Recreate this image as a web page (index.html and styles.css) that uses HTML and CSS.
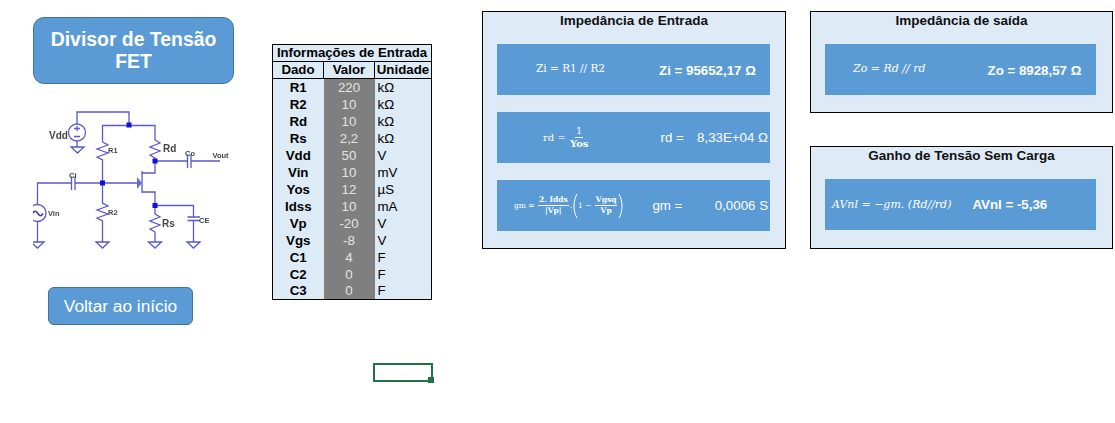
FILE: index.html
```html
<!DOCTYPE html>
<html lang="pt">
<head>
<meta charset="utf-8">
<title>Divisor de Tensão FET</title>
<link rel="stylesheet" href="styles.css">
</head>
<body>
<main class="sheet">
  <section class="left">
    <div class="title-shape">Divisor de Tensão<br>FET</div>
    <svg class="circuit" viewBox="33 108 201 142" width="201" height="142" xmlns="http://www.w3.org/2000/svg">
      <g class="wire">
        <path d="M77 124V112H129V125"/>
        <circle cx="77" cy="132.500" r="8.500"/>
        <path d="M74 128.500h6M77 126v5M74 136.500h6"/>
        <path d="M77 141V147M71 147H84L77.500 153Z"/>
        <path d="M102.500 142V125.500H155V140L160 143L150 147L160 151L150 155L155 158V173H142M142 171V193M142 192H155V214"/>
        <path d="M102.500 142L108 145L97 149L108 153L97 157L102.500 160V203L108 206L97 210L108 214L97 218L102.500 221V242M96 242H109L102.500 248Z"/>
        <path d="M37.500 204V183H71M75 183H137"/>
        <path d="M71.500 176.500V190M75 176.500V190"/>
        <circle cx="37.500" cy="213" r="8.500"/>
        <path class="sine" d="M32.500 213.500C34.500 210.500 36 210.500 38 213.500S41 216.500 43 213.500"/>
        <path d="M37.500 222V242M31 242H44L37.500 248Z"/>
        <path d="M155 214L160 217L150 221L160 225L150 229L155 232V242M148.500 242H161.500L155 248Z"/>
        <path d="M155 161H187.500M191 161H220M187.500 154.500V168M191 154.500V168"/>
        <path d="M155 205.500H193.500V217M187.500 217H200M187.500 220.500H200M193.500 220.500V242M187 242H200L193.500 248Z"/>
      </g>
      <path class="arrow" d="M137 177V189L142 183Z"/>
      <g class="node">
        <rect x="126.500" y="122.500" width="5" height="5"/>
        <rect x="100" y="180.500" width="5" height="5"/>
        <rect x="152.500" y="158.500" width="5" height="5"/>
        <rect x="152.500" y="203" width="5" height="5"/>
      </g>
      <g class="lbl-big">
        <text x="49" y="139">Vdd</text>
        <text x="163" y="151.500">Rd</text>
        <text x="162" y="227">Rs</text>
      </g>
      <g class="lbl-small">
        <text x="108" y="152.500">R1</text>
        <text x="108" y="215">R2</text>
        <text x="69" y="178">Ci</text>
        <text x="48" y="215.500">Vin</text>
        <text x="185" y="156">Co</text>
        <text x="212.500" y="158">Vout</text>
        <text x="199" y="223">CE</text>
      </g>
    </svg>
    <button class="back" type="button">Voltar ao início</button>
  </section>

  <section class="inputs">
    <table class="data">
      <colgroup><col class="c1"><col class="c2"><col class="c3"></colgroup>
      <thead>
        <tr class="caption-row"><th colspan="3">Informações de Entrada</th></tr>
        <tr class="head-row"><th>Dado</th><th>Valor</th><th>Unidade</th></tr>
      </thead>
      <tbody>
        <tr><th>R1</th><td class="val">220</td><td class="unit">kΩ</td></tr>
        <tr><th>R2</th><td class="val">10</td><td class="unit">kΩ</td></tr>
        <tr><th>Rd</th><td class="val">10</td><td class="unit">kΩ</td></tr>
        <tr><th>Rs</th><td class="val">2,2</td><td class="unit">kΩ</td></tr>
        <tr><th>Vdd</th><td class="val">50</td><td class="unit">V</td></tr>
        <tr><th>Vin</th><td class="val">10</td><td class="unit">mV</td></tr>
        <tr><th>Yos</th><td class="val">12</td><td class="unit">µS</td></tr>
        <tr><th>Idss</th><td class="val">10</td><td class="unit">mA</td></tr>
        <tr><th>Vp</th><td class="val">-20</td><td class="unit">V</td></tr>
        <tr><th>Vgs</th><td class="val">-8</td><td class="unit">V</td></tr>
        <tr><th>C1</th><td class="val">4</td><td class="unit">F</td></tr>
        <tr><th>C2</th><td class="val">0</td><td class="unit">F</td></tr>
        <tr><th>C3</th><td class="val">0</td><td class="unit">F</td></tr>
      </tbody>
    </table>
    <div class="selected-cell"><span class="handle"></span></div>
  </section>

  <section class="panel panel-in">
    <h2>Impedância de Entrada</h2>
    <div class="strips">
      <div class="strip zi">
        <span class="formula">Zi = R1 // R2</span>
        <span class="value bold">Zi = 95652,17 Ω</span>
      </div>
      <div class="strip rd">
        <span class="formula f-lg">rd = <span class="frac"><span class="num">1</span><span class="den">Yos</span></span></span>
        <span class="value lab">rd =</span>
        <span class="value res">8,33E+04 Ω</span>
      </div>
      <div class="strip gm">
        <span class="formula f-sm">gm = <span class="frac"><span class="num">2. Idds</span><span class="den">|Vp|</span></span>.<svg class="paren" viewBox="0 0 6 26" width="6" height="26"><path d="M5 1C1 8 1 18 5 25"/></svg>1 − <span class="frac"><span class="num">Vgsq</span><span class="den">Vp</span></span><svg class="paren" viewBox="0 0 6 26" width="6" height="26"><path d="M1 1C5 8 5 18 1 25"/></svg></span>
        <span class="value lab">gm =</span>
        <span class="value res">0,0006 S</span>
      </div>
    </div>
  </section>

  <div class="right">
    <section class="panel panel-out">
      <h2>Impedância de saída</h2>
      <div class="strips">
        <div class="strip zo">
          <span class="formula it">Zo = Rd // rd</span>
          <span class="value bold">Zo = 8928,57 Ω</span>
        </div>
      </div>
    </section>
    <section class="panel panel-gain">
      <h2>Ganho de Tensão Sem Carga</h2>
      <div class="strips">
        <div class="strip av">
          <span class="formula it">AVnl = −gm. (Rd//rd)</span>
          <span class="value av-val">AVnl =&nbsp;-5,36</span>
        </div>
      </div>
    </section>
  </div>
</main>
</body>
</html>
```
FILE: styles.css
```css
* { box-sizing: border-box; }
html, body { margin: 0; padding: 0; background: #fff; }
body { font-family: "Liberation Sans", Arial, sans-serif; color: #000; height: 423px; overflow: hidden; }
.sheet { display: flex; align-items: flex-start; padding-top: 11px; position: relative; }

/* left column */
.left { width: 239px; margin-left: 33px; padding-top: 6px; display: flex; flex-direction: column; align-items: flex-start; flex: none; }
.title-shape {
  width: 201px; height: 67px; background: #5b9bd5; border: 1px solid #41719c; border-radius: 11px;
  color: #fff; font-weight: bold; font-size: 19.400px; line-height: 22px; text-align: center; padding-top: 10px;
}
.circuit { display: block; margin-top: 24px; filter: blur(0.35px); }
.wire { fill: none; stroke: #5a5ac8; stroke-width: 1.300; }
.sine { stroke: #3c3c9c; stroke-width: 1.600; }
.arrow { fill: #6a6ae0; }
.node { fill: #1010d8; }
.lbl-big { font-size: 10px; font-weight: bold; fill: #444; }
.lbl-small { font-size: 7.500px; font-weight: bold; fill: #444; }
.back {
  display: block; width: 145px; height: 38px; margin: 37px 0 0 15px; padding: 0; background: #5b9bd5;
  border: 1px solid #41719c; border-radius: 6px; color: #fff; font: 17.300px "Liberation Sans", Arial, sans-serif;
}

/* table */
.inputs { width: 210px; padding-top: 33px; flex: none; position: relative; }
.data { width: 159px; border-collapse: collapse; table-layout: fixed; border: 1px solid #000; background: #ddebf7; font-size: 13.300px; }
.c1, .c2 { width: 51px; }
.c3 { width: 57px; }
.data th, .data td { padding: 0; height: 17px; line-height: 16px; vertical-align: bottom; }
.data tbody th { text-align: center; font-weight: bold; }
.caption-row th { text-align: center; height: 17px; border-bottom: 1px solid #000; font-size: 13.200px; }
.head-row th { text-align: center; height: 17px; border-bottom: 1px solid #000; }
.head-row th:nth-child(2) { border-left: 1px solid #000; border-right: 1px solid #000; }
.val { background: #7f7f7f; color: #e4e4e4; text-align: center; }
.data .unit { padding-left: 3px; }
.selected-cell { position: absolute; left: 101px; top: 352px; width: 60px; height: 19px; border: 2px solid #217346; }
.handle { position: absolute; right: -3px; bottom: -3px; width: 6px; height: 6px; background: #217346; }

/* panels */
.panel { border: 1px solid #000; background: #deebf7; flex: none; }
.panel h2 { margin: 0; font-size: 13.500px; font-weight: bold; text-align: center; line-height: 16px; padding-top: 1px; color: #111; height: 32px; }
.panel-in { width: 304px; height: 238px; margin-right: 24px; }
.right { display: flex; flex-direction: column; gap: 33px; flex: none; }
.panel-out { width: 303px; height: 102px; }
.panel-gain { width: 303px; height: 103px; }
.strips { display: flex; flex-direction: column; gap: 17px; padding-left: 14px; }
.strip { width: 273px; height: 51px; background: #5b9bd5; color: #fff; display: flex; align-items: center; font-size: 13.300px; white-space: nowrap; }
.panel-out .strip, .panel-gain .strip { width: 271px; }
.formula { font-family: "DejaVu Serif", serif; font-size: 10.500px; display: inline-flex; align-items: center; white-space: pre; }
.it { font-style: italic; }
.bold { font-weight: bold; }
.frac { display: inline-flex; flex-direction: column; align-items: center; margin: 0 1px; }
.num { border-bottom: 1px solid #fff; padding: 0 1px; line-height: 12px; text-align: center; }
.den { line-height: 12px; text-align: center; font-weight: bold; }
.f-lg { font-size: 10px; }
.f-sm { font-size: 7.500px; }
.f-sm .num, .f-sm .den { line-height: 10px; font-weight: bold; }
.paren { display: block; fill: none; stroke: #fff; stroke-width: 1; }
.res { margin-left: auto; padding-right: 2px; }
.zi .formula { margin-left: 39px; margin-top: -3px; }
.zi .value { margin-left: 54px; margin-top: 1px; }
.rd .formula { margin-left: 46px; }
.rd .lab { margin-left: 71px; }
.gm .formula { margin-left: 17px; }
.gm .lab { margin-left: 28px; }
.zo .formula { margin-left: 28px; font-size: 11px; margin-top: -3px; }
.zo .value { margin-left: 62px; margin-top: 1px; }
.av .formula { margin-left: 7px; font-size: 11px; }
.av .av-val { margin-left: 21px; font-weight: bold; }
```
